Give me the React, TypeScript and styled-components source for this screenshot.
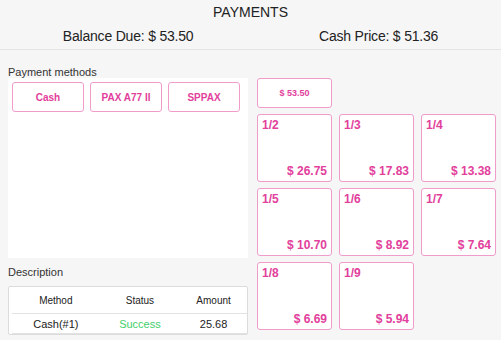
import styled, { createGlobalStyle } from 'styled-components';

const GlobalStyle = createGlobalStyle`
  body {
    margin: 0;
    background: #f6f6f6;
    font-family: "Liberation Sans", Arial, sans-serif;
    color: #222;
  }
`;

const splits = [
  { label: '1/2', amount: '26.75' },
  { label: '1/3', amount: '17.83' },
  { label: '1/4', amount: '13.38' },
  { label: '1/5', amount: '10.70' },
  { label: '1/6', amount: '8.92' },
  { label: '1/7', amount: '7.64' },
  { label: '1/8', amount: '6.69' },
  { label: '1/9', amount: '5.94' },
];

const methods = ['Cash', 'PAX A77 II', 'SPPAX'];

const App: React.FC = () => {
  return (
    <Page>
      <GlobalStyle />
      <Header>
        <Title>PAYMENTS</Title>
        <Totals>
          <Total>Balance Due: $ 53.50</Total>
          <Total>Cash Price: $ 51.36</Total>
        </Totals>
      </Header>
      <Main>
        <LeftCol>
          <SectionLabel>Payment methods</SectionLabel>
          <MethodsPanel>
            <MethodRow>
              {methods.map((m) => (
                <MethodButton key={m}>{m}</MethodButton>
              ))}
            </MethodRow>
          </MethodsPanel>
          <SectionLabel $top={8} $bottom={8}>
            Description
          </SectionLabel>
          <Table>
            <thead>
              <tr>
                <Th>Method</Th>
                <Th>Status</Th>
                <Th>Amount</Th>
              </tr>
            </thead>
            <tbody>
              <tr>
                <Td>Cash(#1)</Td>
                <Td $success>Success</Td>
                <Td>25.68</Td>
              </tr>
            </tbody>
          </Table>
        </LeftCol>
        <RightCol>
          <FullButton>$ 53.50</FullButton>
          <SplitGrid>
            {splits.map((s) => (
              <SplitTile key={s.label}>
                <SplitLabel>{s.label}</SplitLabel>
                <SplitAmount>$ {s.amount}</SplitAmount>
              </SplitTile>
            ))}
          </SplitGrid>
        </RightCol>
      </Main>
    </Page>
  );
};
export default App;

const pink = '#e2409b';
const pinkBorder = '#f09ccb';

const Page = styled.div`
  width: 501px;
  height: 340px;
  overflow: hidden;
`;

const Header = styled.div`
  display: flex;
  flex-direction: column;
  align-items: center;
  padding-top: 4px;
  height: 50px;
  box-sizing: border-box;
  border-bottom: 1px solid #e4e4e4;
`;

const Title = styled.div`
  font-size: 14px;
  line-height: 16px;
  color: #222;
`;

const Totals = styled.div`
  display: flex;
  width: 100%;
  justify-content: space-around;
  margin-top: 8px;
  font-size: 14px;
  line-height: 16px;
  letter-spacing: -0.2px;
`;

const Total = styled.div`
  color: #222;
`;

const Main = styled.div`
  display: flex;
  padding: 0 8px;
  gap: 9px;
`;

const LeftCol = styled.div`
  width: 240px;
  display: flex;
  flex-direction: column;
  padding-top: 16px;
`;

const SectionLabel = styled.div<{ $top?: number; $bottom?: number }>`
  font-size: 11px;
  line-height: 12px;
  color: #333;
  margin-top: ${(p) => p.$top ?? 0}px;
  margin-bottom: ${(p) => p.$bottom ?? 0}px;
`;

const MethodsPanel = styled.div`
  background: #fff;
  height: 180px;
  padding: 4px 8px 0 4px;
  box-sizing: border-box;
`;

const MethodRow = styled.div`
  display: grid;
  grid-template-columns: 72px 72px 72px;
  justify-content: space-between;
`;

const MethodButton = styled.div`
  height: 30px;
  box-sizing: border-box;
  border: 1px solid ${pinkBorder};
  border-radius: 3px;
  background: #fff;
  color: ${pink};
  font-size: 10px;
  font-weight: bold;
  display: flex;
  align-items: center;
  justify-content: center;
`;

const Table = styled.table`
  width: 240px;
  background: #fff;
  border: 1px solid #dcdcdc;
  border-radius: 2px;
  border-collapse: separate;
  border-spacing: 0;
  padding: 0 0 0 3px;
  font-size: 10px;
`;

const Th = styled.th`
  font-weight: normal;
  color: #222;
  height: 26px;
  text-align: center;
  border-bottom: 1px solid #e2e2e2;
  padding: 0;
`;

const Td = styled.td<{ $success?: boolean }>`
  color: ${(p) => (p.$success ? '#3fcf6a' : '#222')};
  font-size: 11px;
  height: 19px;
  text-align: center;
  border-bottom: 1px solid #e2e2e2;
  padding: 0;
`;

const RightCol = styled.div`
  display: flex;
  flex-direction: column;
  padding-top: 28px;
`;

const FullButton = styled.div`
  width: 75px;
  height: 30px;
  box-sizing: border-box;
  border: 1px solid ${pinkBorder};
  border-radius: 3px;
  background: #fff;
  color: ${pink};
  font-size: 9px;
  font-weight: bold;
  display: flex;
  align-items: center;
  justify-content: center;
`;

const SplitGrid = styled.div`
  display: grid;
  grid-template-columns: repeat(3, 75px);
  grid-auto-rows: 68px;
  column-gap: 7px;
  row-gap: 6px;
  margin-top: 6px;
`;

const SplitTile = styled.div`
  box-sizing: border-box;
  border: 1px solid ${pinkBorder};
  border-radius: 3px;
  background: #fff;
  color: ${pink};
  font-weight: bold;
  display: flex;
  flex-direction: column;
  justify-content: space-between;
  padding: 4px 4px 3px 4px;
`;

const SplitLabel = styled.div`
  font-size: 12px;
  line-height: 13px;
`;

const SplitAmount = styled.div`
  font-size: 12px;
  line-height: 14px;
  text-align: right;
`;
